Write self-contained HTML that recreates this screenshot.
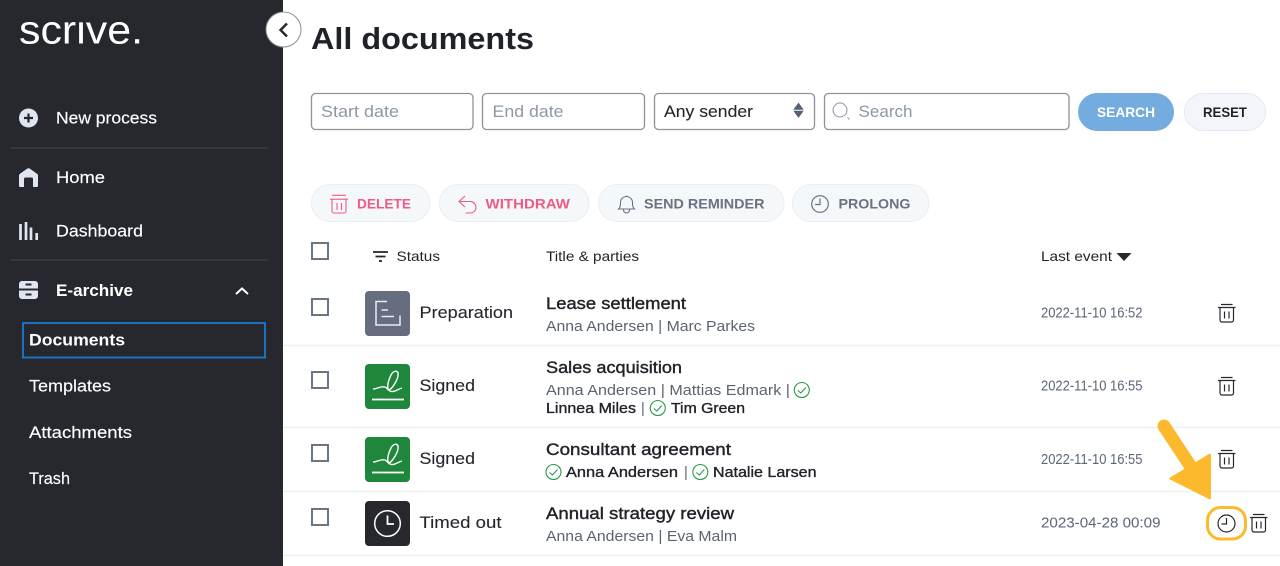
<!DOCTYPE html>
<html><head><meta charset="utf-8"><title>All documents</title>
<style>
html,body{margin:0;padding:0;background:#fff;width:1280px;height:566px;overflow:hidden}
svg{display:block;filter:blur(.3px)}
text{font-family:"Liberation Sans",sans-serif;}
.n{font-size:17px;fill:#fff;stroke:#fff;stroke-width:.15}
.b{font-size:17px;fill:#fff;font-weight:bold}
.m{font-size:14px;fill:#1f2228}
.st{font-size:17px;fill:#23262c;stroke:#23262c;stroke-width:.1}
.t{font-size:17px;fill:#1f2228;stroke:#1f2228;stroke-width:.4}
.s{font-size:14.5px;fill:#5c6370}
.d{font-size:14.5px;fill:#1f2228;stroke:#1f2228;stroke-width:.35}
.dt{font-size:14.5px;fill:#5c6678}
.ph{font-size:17px;fill:#8d97a7}
.btn{font-size:14px;font-weight:bold}
.box{fill:#fff;stroke:#8f9296;stroke-width:1.3}
.pill{fill:#f5f8fa;stroke:#e9eef2;stroke-width:1}
.cb{fill:#fff;stroke:#6b7589;stroke-width:2}
.ln{stroke:#eceff4;stroke-width:1.5}
.ck{fill:none;stroke:#2a9a4a;stroke-width:1.1}
</style></head><body>
<svg width="1280" height="566" viewBox="0 0 1280 566" xmlns="http://www.w3.org/2000/svg">
<rect width="1280" height="566" fill="#fff"/>
<rect width="283" height="566" fill="#26282e"/>
<text x="19" y="43.5" font-size="40" fill="#fff" textLength="124" lengthAdjust="spacingAndGlyphs">scrive.</text>
<rect x="15" y="8" width="135" height="13.500" fill="#26282e"/>
<circle cx="283.5" cy="29.5" r="17.5" fill="#fff" stroke="#8a9096" stroke-width="1"/>
<path d="M287 23.500l-6.500 6.500 6.500 6.500" fill="none" stroke="#26282e" stroke-width="2.400"/>

<circle cx="28.500" cy="118" r="9.500" fill="#dfe6f0"/><path d="M28.500 113.500v9M24 118h9" stroke="#26282e" stroke-width="2.200"/>
<text class="n" x="56" y="123.500" textLength="101" lengthAdjust="spacingAndGlyphs">New process</text>
<line x1="11" x2="268" y1="148" y2="148" stroke="#3a4147" stroke-width="1.200"/>
<path d="M19 175.500q0-1 1-1.700l7-5q1.500-1 3 0l7 5q1 .7 1 1.700V186a1 1 0 0 1-1 1h-4v-8a1.500 1.500 0 0 0-1.500-1.500h-6a1.500 1.500 0 0 0-1.500 1.500v8h-4a1 1 0 0 1-1-1z" fill="#dfe6f0"/>
<text class="n" x="56" y="183" textLength="49" lengthAdjust="spacingAndGlyphs">Home</text>
<path d="M20.500 224v16M26 222v18M31 227.500v12.500M36.700 233v7" stroke="#dfe6f0" stroke-width="2.700" fill="none"/>
<text class="n" x="56" y="236.500" textLength="87" lengthAdjust="spacingAndGlyphs">Dashboard</text>
<line x1="11" x2="268" y1="260" y2="260" stroke="#3a4147" stroke-width="1.200"/>
<path d="M22 281h13a3 3 0 0 1 3 3v4.500H19V284a3 3 0 0 1 3-3zM19 290.500h19v5.500a3 3 0 0 1-3 3H22a3 3 0 0 1-3-3z" fill="#dfe6f0"/>
<path d="M25.500 284.500h6M25.500 294.500h6" stroke="#26282e" stroke-width="2"/>
<text class="b" x="56" y="296" textLength="77" lengthAdjust="spacingAndGlyphs">E-archive</text>
<path d="M236 294l6-5.500 6 5.500" fill="none" stroke="#fff" stroke-width="2"/>
<rect x="23" y="323" width="242" height="34.500" fill="none" stroke="#1b70c0" stroke-width="2"/>
<text class="b" x="29" y="345.500" textLength="96" lengthAdjust="spacingAndGlyphs">Documents</text>
<text class="n" x="29" y="391.500" textLength="82" lengthAdjust="spacingAndGlyphs">Templates</text>
<text class="n" x="29" y="438" textLength="103" lengthAdjust="spacingAndGlyphs">Attachments</text>
<text class="n" x="29" y="484" textLength="41" lengthAdjust="spacingAndGlyphs">Trash</text>

<text x="311" y="49" font-size="31" font-weight="bold" fill="#1f2228" textLength="223" lengthAdjust="spacingAndGlyphs">All documents</text>

<rect class="box" x="311.500" y="93.500" width="161.500" height="36" rx="4"/>
<text class="ph" x="321" y="117" textLength="78" lengthAdjust="spacingAndGlyphs">Start date</text>
<rect class="box" x="482.500" y="93.500" width="162" height="36" rx="4"/>
<text class="ph" x="492.500" y="117" textLength="71" lengthAdjust="spacingAndGlyphs">End date</text>
<rect class="box" x="654.500" y="93.500" width="160" height="36" rx="4"/>
<text class="st" x="664" y="117" textLength="89" lengthAdjust="spacingAndGlyphs">Any sender</text>
<path d="M798.500 103l4.700 6.500h-9.400zM798.500 117.500l4.700-6.500h-9.400z" fill="#566175" stroke="#566175" stroke-width=".6" stroke-linejoin="round"/>
<rect class="box" x="824.500" y="93.500" width="244.500" height="36" rx="4"/>
<circle cx="840" cy="110" r="7" fill="none" stroke="#8d97a7" stroke-width="1"/><path d="M847.500 117.500l2 2" stroke="#8d97a7" stroke-width="1"/>
<text class="ph" x="858.500" y="117" textLength="54" lengthAdjust="spacingAndGlyphs">Search</text>
<rect x="1078" y="93" width="96" height="38" rx="19" fill="#75acdf"/>
<text class="btn" fill="#fff" x="1097" y="117" textLength="58" lengthAdjust="spacingAndGlyphs">SEARCH</text>
<rect x="1184.500" y="93.500" width="81" height="37" rx="18.500" fill="#f2f6fa" stroke="#e3e9f0"/>
<text class="btn" fill="#1f2228" x="1203" y="117" textLength="44" lengthAdjust="spacingAndGlyphs">RESET</text>

<rect class="pill" x="311.500" y="184.500" width="118.500" height="37" rx="18.500"/>
<path d="M332 195.300h14M330 199.200h18M332 199.200v11.800a2 2 0 0 0 2 2h10a2 2 0 0 0 2-2v-11.800M337 203v7M341.500 203v7" fill="none" stroke="#ef5a85" stroke-width="1.100"/>
<text class="btn" fill="#ef5a85" x="357" y="208.500" textLength="54" lengthAdjust="spacingAndGlyphs">DELETE</text>
<rect class="pill" x="439.500" y="184.500" width="149.500" height="37" rx="18.500"/>
<path d="M465 196l-6 5.500 6 5.500M459.500 201.500h10a6 6 0 0 1 6.500 6c0 3-2.500 5.500-6 5.500h-4.500" fill="none" stroke="#ef5a85" stroke-width="1.100"/>
<text class="btn" fill="#ef5a85" x="485.500" y="208.500" textLength="84.500" lengthAdjust="spacingAndGlyphs">WITHDRAW</text>
<rect class="pill" x="598.500" y="184.500" width="185.500" height="37" rx="18.500"/>
<path d="M618.500 209c2-2 2-3.500 2-6.500a6 6 0 0 1 12 0c0 3 0 4.500 2 6.500zM623.500 209v1a3 3 0 0 0 6 0v-1M626.500 196.500v-1" fill="none" stroke="#6a7280" stroke-width="1.100"/>
<text class="btn" fill="#6a7280" x="644" y="208.500" textLength="120.500" lengthAdjust="spacingAndGlyphs">SEND REMINDER</text>
<rect class="pill" x="792.500" y="184.500" width="136.500" height="37" rx="18.500"/>
<circle cx="820" cy="204" r="8.300" fill="none" stroke="#6a7280" stroke-width="1.200"/><path d="M820 198.500v6h-5" fill="none" stroke="#6a7280" stroke-width="1.200"/>
<text class="btn" fill="#6a7280" x="838.500" y="208.500" textLength="72" lengthAdjust="spacingAndGlyphs">PROLONG</text>

<rect class="cb" x="312" y="243" width="16" height="16"/>
<path d="M373 252h15M375.500 256.500h10M379 261h3" stroke="#1f2228" stroke-width="1.700" fill="none"/>
<text class="m" x="396.500" y="261" textLength="43.500" lengthAdjust="spacingAndGlyphs">Status</text>
<text class="m" x="546" y="261" textLength="93" lengthAdjust="spacingAndGlyphs">Title &amp; parties</text>
<text class="m" x="1041" y="261" textLength="71" lengthAdjust="spacingAndGlyphs">Last event</text>
<path d="M1116.500 253h15l-7.500 8z" fill="#26282e"/>

<line class="ln" x1="283" x2="1280" y1="345.500" y2="345.500"/>
<line class="ln" x1="283" x2="1280" y1="427.500" y2="427.500"/>
<line class="ln" x1="283" x2="1280" y1="491.500" y2="491.500"/>
<line class="ln" x1="283" x2="1280" y1="555.500" y2="555.500"/>

<rect class="cb" x="312" y="299" width="16" height="16"/>
<rect class="cb" x="312" y="372" width="16" height="16"/>
<rect class="cb" x="312" y="445" width="16" height="16"/>
<rect class="cb" x="312" y="509" width="16" height="16"/>

<rect x="365" y="291" width="45" height="45" rx="4" fill="#666d7e"/>
<path d="M387 301.500h-11v23.500h24v-9.500M381.500 310h6.500M381.500 316.500h12.500" fill="none" stroke="#e9ecf0" stroke-width="1.500"/>
<rect x="365" y="364" width="45" height="45" rx="4" fill="#1e873c"/>
<path d="M373 389C377 389 380 386 385 387C388 388 387 390 389 390C393 388 399 378 398 373C397 370 393 371 391 375C388 381 386 389 390 391C394 393 398 389 402 388" fill="none" stroke="#fff" stroke-width="1.400"/>
<path d="M372 399.500h32" stroke="#fff" stroke-width="1.700"/>
<rect x="365" y="437" width="45" height="45" rx="4" fill="#1e873c"/>
<path d="M373 462C377 462 380 459 385 460C388 461 387 463 389 463C393 461 399 451 398 446C397 443 393 444 391 448C388 454 386 462 390 464C394 466 398 462 402 461" fill="none" stroke="#fff" stroke-width="1.400"/>
<path d="M372 472.500h32" stroke="#fff" stroke-width="1.700"/>
<rect x="365" y="501" width="45" height="45" rx="4" fill="#26282e"/>
<circle cx="387.500" cy="523.500" r="12.800" fill="none" stroke="#fff" stroke-width="1.500"/><path d="M387.500 515.500v8.500h6.500" fill="none" stroke="#fff" stroke-width="1.800"/>

<text class="st" x="419.500" y="318" textLength="93.500" lengthAdjust="spacingAndGlyphs">Preparation</text>
<text class="st" x="419.500" y="391" textLength="55.500" lengthAdjust="spacingAndGlyphs">Signed</text>
<text class="st" x="419.500" y="464" textLength="55.500" lengthAdjust="spacingAndGlyphs">Signed</text>
<text class="st" x="419.500" y="528" textLength="82" lengthAdjust="spacingAndGlyphs">Timed out</text>

<text class="t" x="546" y="309" textLength="140" lengthAdjust="spacingAndGlyphs">Lease settlement</text>
<text class="s" x="546" y="331" textLength="209" lengthAdjust="spacingAndGlyphs">Anna Andersen | Marc Parkes</text>
<text class="t" x="546" y="373" textLength="136" lengthAdjust="spacingAndGlyphs">Sales acquisition</text>
<text class="s" x="546" y="395" textLength="244" lengthAdjust="spacingAndGlyphs">Anna Andersen | Mattias Edmark |</text>
<circle class="ck" cx="801.800" cy="390" r="7.500"/><path class="ck" d="M797.800 390.500l3 2.500 5-5.500"/>
<text class="d" x="546" y="413" textLength="90" lengthAdjust="spacingAndGlyphs">Linnea Miles</text>
<text class="s" x="641" y="413">|</text>
<circle class="ck" cx="657.800" cy="408" r="7.500"/><path class="ck" d="M653.800 408.500l3 2.500 5-5.500"/>
<text class="d" x="671" y="413" textLength="74" lengthAdjust="spacingAndGlyphs">Tim Green</text>
<text class="t" x="546" y="455" textLength="185" lengthAdjust="spacingAndGlyphs">Consultant agreement</text>
<circle class="ck" cx="553.500" cy="472" r="7.500"/><path class="ck" d="M549.500 472.500l3 2.500 5-5.500"/>
<text class="d" x="566" y="477" textLength="112" lengthAdjust="spacingAndGlyphs">Anna Andersen</text>
<text class="s" x="684" y="477">|</text>
<circle class="ck" cx="700.300" cy="472" r="7.500"/><path class="ck" d="M696.300 472.500l3 2.500 5-5.500"/>
<text class="d" x="713" y="477" textLength="103.500" lengthAdjust="spacingAndGlyphs">Natalie Larsen</text>
<text class="t" x="546" y="519" textLength="188" lengthAdjust="spacingAndGlyphs">Annual strategy review</text>
<text class="s" x="546" y="541" textLength="191" lengthAdjust="spacingAndGlyphs">Anna Andersen | Eva Malm</text>

<text class="dt" x="1041" y="317.500" textLength="101.500" lengthAdjust="spacingAndGlyphs">2022-11-10 16:52</text>
<text class="dt" x="1041" y="390.500" textLength="101.500" lengthAdjust="spacingAndGlyphs">2022-11-10 16:55</text>
<text class="dt" x="1041" y="464" textLength="101.500" lengthAdjust="spacingAndGlyphs">2022-11-10 16:55</text>
<text class="dt" x="1041" y="527.500" textLength="119.500" lengthAdjust="spacingAndGlyphs">2023-04-28 00:09</text>

<g fill="none" stroke="#26282e" stroke-width="1.200">
<path d="M1218 307.500h17.500M1221 304.500h11.500M1220 307.500v12.500a2 2 0 0 0 2 2h9.500a2 2 0 0 0 2-2v-12.500M1224.500 311.500v7M1229 311.500v7"/>
<path d="M1218 380.500h17.500M1221 377.500h11.500M1220 380.500v12.500a2 2 0 0 0 2 2h9.500a2 2 0 0 0 2-2v-12.500M1224.500 384.500v7M1229 384.500v7"/>
<path d="M1218 453.500h17.500M1221 450.500h11.500M1220 453.500v12.500a2 2 0 0 0 2 2h9.500a2 2 0 0 0 2-2v-12.500M1224.500 457.500v7M1229 457.500v7"/>
<path d="M1250 517.500h17.500M1253 514.500h11.500M1252 517.500v12.500a2 2 0 0 0 2 2h9.500a2 2 0 0 0 2-2v-12.500M1256.500 521.500v7M1261 521.500v7"/>
<circle cx="1226.500" cy="523.500" r="8.500"/><path d="M1226.500 518v6h-5"/>
</g>
<rect x="1207.500" y="507.500" width="38" height="31.500" rx="13" fill="none" stroke="#fdb92e" stroke-width="3"/>
<path d="M1164 426l29 44" stroke="#fdb92e" stroke-width="13" stroke-linecap="round" fill="none"/>
<path d="M1211 454.500v44a1.500 1.500 0 0 1-2 .5l-39-19.500q-1.500-1 0-2l39-23.500q2-1 2 .5z" fill="#fdb92e"/>
</svg>
</body></html>
